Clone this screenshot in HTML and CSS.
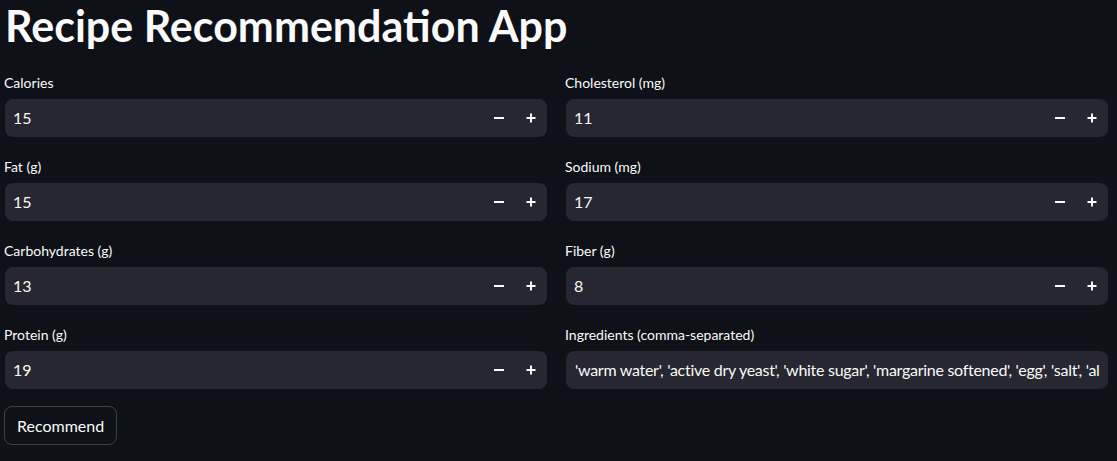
FILE: index.html
```html
<!DOCTYPE html>
<html lang="en">
<head>
<meta charset="utf-8">
<title>Recipe Recommendation App</title>
<link rel="stylesheet" href="styles.css">
</head>
<body>
<main class="app">
  <h1 class="title">Recipe Recommendation App</h1>
  <div class="columns">
    <div class="col">
      <div class="field">
        <label class="label">Calories</label>
        <div class="numbox"><span class="value">15</span><span class="step minus"></span><span class="step plus"></span></div>
      </div>
      <div class="field">
        <label class="label">Fat (g)</label>
        <div class="numbox"><span class="value">15</span><span class="step minus"></span><span class="step plus"></span></div>
      </div>
      <div class="field">
        <label class="label">Carbohydrates (g)</label>
        <div class="numbox"><span class="value">13</span><span class="step minus"></span><span class="step plus"></span></div>
      </div>
      <div class="field">
        <label class="label">Protein (g)</label>
        <div class="numbox"><span class="value">19</span><span class="step minus"></span><span class="step plus"></span></div>
      </div>
    </div>
    <div class="col">
      <div class="field">
        <label class="label">Cholesterol (mg)</label>
        <div class="numbox"><span class="value">11</span><span class="step minus"></span><span class="step plus"></span></div>
      </div>
      <div class="field">
        <label class="label">Sodium (mg)</label>
        <div class="numbox"><span class="value">17</span><span class="step minus"></span><span class="step plus"></span></div>
      </div>
      <div class="field">
        <label class="label">Fiber (g)</label>
        <div class="numbox"><span class="value">8</span><span class="step minus"></span><span class="step plus"></span></div>
      </div>
      <div class="field">
        <label class="label">Ingredients (comma-separated)</label>
        <div class="textbox"><span class="text">'warm water', 'active dry yeast', 'white sugar', 'margarine softened', 'egg', 'salt', 'all-purpose flour', 'butter melted'</span></div>
      </div>
    </div>
  </div>
  <button class="btn">Recommend</button>
</main>
</body>
</html>
```

FILE: styles.css
```css
html, body {
  margin: 0;
  padding: 0;
  background: #0e1117;
  color: #fafafa;
  font-family: Lato, "Noto Sans", sans-serif;
}

.app {
  padding: 0 9px 0 5px;
  display: flex;
  flex-direction: column;
  align-items: flex-start;
}

.title {
  margin: 0;
  padding: 0 0 20px;
  font-size: 43px;
  line-height: 1.2;
  font-weight: 700;
}

.columns {
  align-self: stretch;
  display: grid;
  grid-template-columns: minmax(0, 1fr) minmax(0, 1fr);
  column-gap: 19px;
}

.col {
  display: flex;
  flex-direction: column;
  gap: 19px;
  min-width: 0;
}

.field {
  display: flex;
  flex-direction: column;
  min-width: 0;
}

.label {
  font-size: 14px;
  line-height: 21px;
  margin-bottom: 6px;
  margin-left: -1px;
}

.numbox, .textbox {
  height: 38px;
  background: #262730;
  border-radius: 8px;
  display: flex;
  align-items: center;
  overflow: hidden;
  min-width: 0;
}

.value {
  flex: 1;
  padding-left: 8px;
  font-size: 16px;
}

.textbox {
  padding: 0 8px 0 9px;
}

.text {
  font-size: 16px;
  letter-spacing: -0.28px;
  white-space: nowrap;
  overflow: hidden;
  min-width: 0;
}

.step {
  width: 32px;
  height: 38px;
  position: relative;
  flex: none;
}

.step::before, .step::after {
  content: "";
  position: absolute;
  background: #fafafa;
  left: 50%;
  top: 50%;
}

.minus::before {
  width: 10px;
  height: 2px;
  transform: translate(-50%, -50%);
}

.minus::after { display: none; }

.plus::before {
  width: 9px;
  height: 2px;
  transform: translate(-50%, -50%);
}

.plus::after {
  width: 2px;
  height: 9px;
  transform: translate(-50%, -50%);
}

.btn {
  margin-top: 17px;
  margin-left: -1px;
  height: 39px;
  padding: 0 12px;
  background: transparent;
  border: 1px solid rgba(250, 250, 250, 0.2);
  border-radius: 8px;
  color: #fafafa;
  font-family: Lato, "Noto Sans", sans-serif;
  font-size: 16px;
}
```
